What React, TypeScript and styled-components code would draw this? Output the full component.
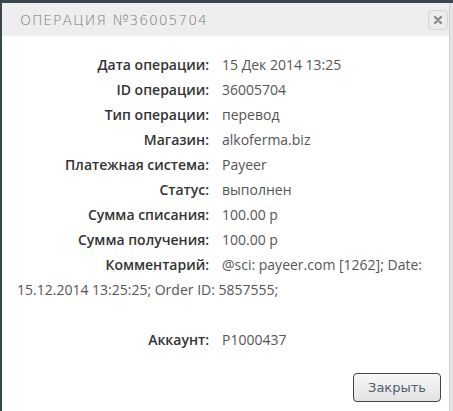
import React from 'react';
import styled, { createGlobalStyle } from 'styled-components';

const GlobalStyle = createGlobalStyle`
  html, body {
    margin: 0;
    padding: 0;
    background: #37474d;
  }
  body {
    font-family: 'Open Sans', 'Liberation Sans', sans-serif;
  }
`;

const Page = styled.div`
  display: flex;
  width: 453px;
  height: 411px;
  padding: 3px 0 0 2px;
  box-sizing: border-box;
  overflow: hidden;
`;

const Dialog = styled.div`
  width: 448px;
  display: flex;
  flex-direction: column;
  background: #fff;
  border-right: 1px solid #cfcfcf;
  box-sizing: border-box;
`;

const Edge = styled.div`
  flex: 1;
  background: #e4e4e4;
`;

const Header = styled.div`
  height: 33px;
  display: flex;
  align-items: center;
  justify-content: space-between;
  padding: 0 1px 0 18px;
  background: #eeeeee;
`;

const Title = styled.div`
  font-family: 'DejaVu Sans', sans-serif;
  font-weight: 300;
  font-size: 14px;
  letter-spacing: 0.9px;
  color: #7a7a7a;
`;

const CloseButton = styled.button`
  width: 20px;
  height: 20px;
  padding: 0;
  display: flex;
  align-items: center;
  justify-content: center;
  border: 1px solid #d4d4d4;
  border-radius: 4px;
  background: #ececec;
`;

const Body = styled.div`
  flex: 1;
  padding: 16px 15px 0 15px;
  font-size: 14px;
  line-height: 25px;
  color: #555;
`;

const Row = styled.div<{ $gap?: boolean }>`
  margin-top: ${(p) => (p.$gap ? '25px' : '0')};
`;

const Label = styled.span`
  display: inline-block;
  width: 192px;
  text-align: right;
  font-weight: 600;
  color: #333;
`;

const Value = styled.span`
  margin-left: 13px;
  font-weight: 400;
  color: #555;
`;

const Footer = styled.div`
  display: flex;
  justify-content: flex-end;
  padding: 0 8px 9px 0;
`;

const Button = styled.button`
  width: 88px;
  height: 29px;
  font-family: 'DejaVu Sans', sans-serif;
  font-size: 13px;
  color: #4c5f73;
  border: 1px solid #444;
  border-radius: 4px;
  background: linear-gradient(#f8f8f8, #e2e2e2);
`;

const rows: [string, string][] = [
  ['Дата операции:', '15 Дек 2014 13:25'],
  ['ID операции:', '36005704'],
  ['Тип операции:', 'перевод'],
  ['Магазин:', 'alkoferma.biz'],
  ['Платежная система:', 'Payeer'],
  ['Статус:', 'выполнен'],
  ['Сумма списания:', '100.00 р'],
  ['Сумма получения:', '100.00 р'],
  ['Комментарий:', '@sci: payeer.com [1262]; Date: 15.12.2014 13:25:25; Order ID: 5857555;'],
];

export default function App(): JSX.Element {
  return (
    <Page>
      <GlobalStyle />
      <Dialog>
        <Header>
          <Title>ОПЕРАЦИЯ №36005704</Title>
          <CloseButton aria-label='close'>
            <svg width='10' height='10' viewBox='0 0 10 10'>
              <path d='M2 2 L8 8 M8 2 L2 8' stroke='#8a8a8a' strokeWidth='2.4' strokeLinecap='round' />
            </svg>
          </CloseButton>
        </Header>
        <Body>
          {rows.map(([label, value]) => (
            <Row key={label}>
              <Label>{label}</Label>
              <Value>{value}</Value>
            </Row>
          ))}
          <Row $gap>
            <Label>Аккаунт:</Label>
            <Value>P1000437</Value>
          </Row>
        </Body>
        <Footer>
          <Button>Закрыть</Button>
        </Footer>
      </Dialog>
      <Edge />
    </Page>
  );
}
